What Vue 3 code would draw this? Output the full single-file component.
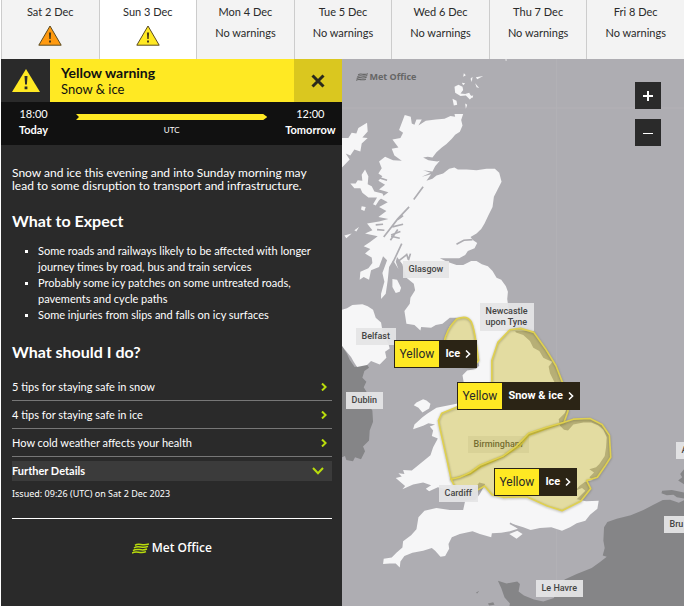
<script setup>
import { ref } from 'vue'

const days = [
  { label: 'Sat 2 Dec', level: 'amber' },
  { label: 'Sun 3 Dec', level: 'yellow' },
  { label: 'Mon 4 Dec' },
  { label: 'Tue 5 Dec' },
  { label: 'Wed 6 Dec' },
  { label: 'Thu 7 Dec' },
  { label: 'Fri 8 Dec' },
]
const selectedDay = ref('Sun 3 Dec')

const advice = [
  '5 tips for staying safe in snow',
  '4 tips for staying safe in ice',
  'How cold weather affects your health',
]

// x / y are positions on the map canvas
const cities = [
  { name: 'Glasgow', x: 61, y: 202 },
  { name: 'Newcastle\nupon Tyne', x: 138, y: 244 },
  { name: 'Belfast', x: 14, y: 269 },
  { name: 'Dublin', x: 4, y: 333 },
  { name: 'Birmingham', x: 126, y: 377 },
  { name: 'Cardiff', x: 97, y: 426, front: true },
  { name: 'Le Havre', x: 194, y: 521 },
  { name: 'A', x: 334, y: 383 },
  { name: 'Bru', x: 322, y: 457 },
]

const pins = [
  { level: 'Yellow', type: 'Ice', x: 52, y: 281 },
  { level: 'Yellow', type: 'Snow & ice', x: 115, y: 323 },
  { level: 'Yellow', type: 'Ice', x: 152, y: 409 },
]

const areas = [
  'M340 776 C360 768 376 770 384 784 C394 806 396 830 402 870 L406 900 L390 920 L330 910 L302 850 C306 824 316 800 340 776 Z',
  'M500 808 L532 804 572 816 606 864 638 916 656 962 672 1000 674 1052 662 1086 610 1104 556 1124 530 1156 480 1188 410 1220 380 1240 324 1256 312 1200 290 1102 286 1080 296 1058 340 1040 440 1020 446 960 446 900 464 846 Z',
  'M324 1256 L350 1250 380 1236 410 1214 480 1186 520 1156 556 1118 610 1100 660 1086 690 1076 740 1074 776 1092 798 1124 802 1190 784 1218 762 1250 730 1260 742 1284 712 1322 656 1350 612 1336 550 1308 480 1310 446 1302 424 1276 400 1290 374 1298 344 1296 Z',
]
</script>

<template>
  <div class="page">
    <nav class="days">
      <button
        v-for="day in days"
        :key="day.label"
        class="day"
        :class="{ active: day.label === selectedDay }"
        @click="selectedDay = day.label"
      >
        <span>{{ day.label }}</span>
        <svg v-if="day.level" class="day-icon" :class="day.level" viewBox="0 0 24 21">
          <path d="M12 1 L23.2 20.2 H.8 Z" stroke="#5a4a20" stroke-width="1" />
          <path d="M10.9 7.5 h2.2 l-.4 6.6 h-1.4 Z M11 15.4 h2 v2 h-2 Z" class="mark" />
        </svg>
        <span v-else>No warnings</span>
      </button>
    </nav>

    <div class="main">
      <section class="panel">
        <header class="warning-head">
          <div class="warning-icon">
            <svg viewBox="0 0 28 23">
              <path d="M14 0 L28 23 H0 Z" fill="#ffe923" />
              <path d="M12.5 7 h3 l-.6 8.6 h-1.8 Z M12.6 17.4 h2.8 v2.8 h-2.8 Z" fill="#2a2a2a" />
            </svg>
          </div>
          <div class="warning-title">
            <h1>Yellow warning</h1>
            <p>Snow &amp; ice</p>
          </div>
          <button class="close-btn" aria-label="Close">
            <svg viewBox="0 0 14 14">
              <path d="M1.5 1.5 L12.5 12.5 M12.5 1.5 L1.5 12.5" stroke="#2a2a1c" stroke-width="3" />
            </svg>
          </button>
        </header>

        <div class="timeline">
          <div class="time"><span>18:00</span><strong>Today</strong></div>
          <div class="bar">
            <svg viewBox="0 0 192 6" preserveAspectRatio="none">
              <path d="M0 0 H188 L192 3 L188 6 H0 L3 3 Z" fill="#ffe923" />
            </svg>
            <small>UTC</small>
          </div>
          <div class="time"><span>12:00</span><strong>Tomorrow</strong></div>
        </div>

        <div class="details">
          <p class="intro">
            Snow and ice this evening and into Sunday morning may
            lead to some disruption to transport and infrastructure.
          </p>
          <h2>What to Expect</h2>
          <ul class="expect">
            <li>Some roads and railways likely to be affected with longer journey times by road, bus and train services</li>
            <li>Probably some icy patches on some untreated roads, pavements and cycle paths</li>
            <li>Some injuries from slips and falls on icy surfaces</li>
          </ul>
          <h2>What should I do?</h2>
          <a v-for="tip in advice" :key="tip" href="#" class="tip">
            <span>{{ tip }}</span>
            <svg viewBox="0 0 6 8"><path d="M1 .5 L4.6 4 L1 7.5" /></svg>
          </a>
          <button class="further">
            <span>Further Details</span>
            <svg viewBox="0 0 12 8"><path d="M1 1 L6 6.3 L11 1" /></svg>
          </button>
          <p class="issued">Issued: 09:26 (UTC) on Sat 2 Dec 2023</p>
          <footer class="brand">
            <svg viewBox="0 0 17 11">
              <path d="M3 2.4 C7 -.8 10 3.6 17 .9 M2 5 C6.5 1.6 10 6.2 16 3.4 M1 7.6 C5.5 4.2 9 8.8 15 6 M0 10.2 C4.5 6.8 8 11.4 14 8.6" />
            </svg>
            <span>Met Office</span>
          </footer>
        </div>
      </section>

      <section class="map">
        <svg class="layer" viewBox="-3 -3 1026 1641" preserveAspectRatio="xMinYMin slice">
          <path class="grid" d="M640 -3 V1638 M-3 144 H1023" />
          <!-- Ireland and the continent -->
          <path class="far" d="M-3 856 L12 880 20 898 35 920 58 914 72 912 78 922 64 932 58 952 70 964 62 980 74 1000 68 1012 78 1036 88 1050 90 1084 80 1110 78 1140 60 1158 66 1172 54 1196 36 1190 30 1202 10 1198 6 1186 -3 1190 Z" />
          <path class="far" d="M1023 1318 L1006 1326 980 1317 958 1318 930 1332 900 1348 862 1364 820 1374 792 1384 782 1400 780 1440 784 1462 778 1484 790 1488 770 1504 745 1522 700 1540 664 1556 640 1585 632 1612 600 1622 572 1616 542 1604 526 1592 530 1570 522 1562 490 1568 464 1560 474 1582 484 1610 500 1628 498 1638 H1023 Z" />
          <path class="far" d="M1023 1224 L1010 1240 1016 1250 1004 1260 1023 1272 Z M956 1290 L985 1288 1023 1296 1023 1314 1000 1310 990 1302 970 1304 954 1298 Z M398 1596 L408 1590 402 1598 Z M434 1628 L450 1624 454 1632 438 1634 Z" />
          <!-- Great Britain -->
          <path class="land" d="M185 165 L203 170 206 190 214 194 220 178 236 178 226 196 248 182 278 178 304 176 322 168 336 170 334 162 360 162 354 180 358 196 350 215 336 224 326 236 310 252 296 262 280 276 268 292 254 290 240 292 256 300 282 304 290 302 276 318 268 334 240 330 262 338 236 350 264 342 250 362 268 356 280 346 300 340 318 326 334 322 344 328 370 328 400 330 430 326 455 326 468 338 475 365 462 390 452 410 448 440 436 464 424 490 414 506 400 520 382 530 390 540 402 548 394 564 374 572 366 584 348 594 330 594 290 594 312 604 340 614 360 614 384 602 400 602 416 612 434 618 448 632 460 652 474 658 488 678 494 694 492 716 496 746 506 770 510 798 518 816 540 824 560 842 570 862 588 872 600 892 612 898 628 904 616 918 620 938 632 962 654 1000 674 1036 664 1058 646 1076 650 1096 662 1108 674 1110 690 1092 720 1086 744 1086 764 1094 780 1108 790 1130 788 1160 784 1186 768 1210 758 1220 738 1226 752 1236 738 1250 748 1258 724 1264 708 1276 696 1290 716 1282 726 1290 710 1306 700 1316 728 1322 766 1320 762 1344 740 1362 726 1380 700 1388 680 1400 656 1410 624 1400 590 1402 562 1408 540 1400 508 1390 524 1404 500 1412 474 1416 446 1418 444 1430 410 1420 388 1412 350 1420 326 1430 316 1450 318 1464 306 1486 292 1488 276 1470 266 1462 240 1470 208 1476 184 1486 172 1502 170 1520 158 1508 140 1508 120 1510 122 1494 146 1490 160 1476 178 1460 180 1442 204 1424 220 1406 226 1370 244 1350 280 1342 320 1348 360 1348 366 1320 396 1318 410 1300 426 1270 408 1266 394 1284 368 1290 350 1296 320 1300 304 1284 284 1280 258 1292 248 1284 264 1274 240 1266 210 1272 178 1286 186 1276 158 1252 176 1248 166 1238 184 1240 180 1228 206 1230 230 1210 262 1184 270 1160 284 1134 266 1126 270 1110 260 1098 276 1092 256 1088 240 1096 210 1106 214 1092 238 1070 252 1060 280 1042 340 1030 368 1010 364 980 358 944 372 930 398 926 408 916 400 884 370 890 340 870 318 862 306 840 318 800 340 776 362 772 320 772 298 790 278 794 264 802 234 800 232 810 214 794 190 790 184 752 200 730 202 712 216 690 212 670 190 652 182 630 178 612 162 590 158 604 166 626 150 600 138 620 134 660 128 700 114 716 114 700 124 664 118 638 132 600 120 588 108 620 84 630 78 658 62 650 50 658 52 634 76 624 88 608 86 592 66 580 82 566 62 558 80 546 104 528 66 520 88 510 72 490 108 484 136 476 106 470 130 452 108 440 134 426 112 414 136 396 108 388 126 374 106 362 118 348 106 340 116 324 108 304 126 290 150 300 176 302 154 286 146 266 166 262 148 238 172 234 180 218 168 210 Z" />
          <path class="land" d="M22 370 L38 370 44 360 58 362 56 344 66 328 76 348 74 372 86 378 94 394 118 400 122 408 108 420 98 436 90 432 102 412 76 412 58 398 52 384 34 384 Z M-3 234 L16 234 26 218 40 220 46 204 72 188 74 214 58 232 74 234 56 250 52 274 34 268 22 286 8 280 20 298 -3 322 Z M56 438 L68 440 64 452 54 448 Z M4 526 L26 520 10 534 Z M34 510 L48 500 40 514 Z" />
          <path class="land" d="M334 80 L346 74 358 80 360 90 352 100 366 102 378 98 386 112 380 118 368 106 352 108 336 98 Z M328 116 L340 122 342 134 332 136 Z M366 130 L372 134 368 146 Z M362 40 L368 46 360 50 Z M356 68 L366 70 360 76 Z M382 56 L388 50 386 66 Z M398 52 L420 48 402 58 Z M396 70 L408 84 400 82 Z M380 108 L390 106 388 114 Z M486 -2 L492 -1 488 3 Z" />
          <path class="land" d="M-3 748 L12 744 28 734 58 732 74 738 90 748 98 772 114 786 118 810 136 850 140 864 126 874 130 892 110 912 84 902 72 914 42 920 32 904 24 890 4 866 -3 856 Z M148 656 L162 658 174 682 170 694 158 698 148 680 Z M220 1026 L240 1016 250 1020 262 1030 258 1044 238 1056 226 1042 212 1034 Z M498 1420 L522 1410 538 1420 520 1434 Z" />
          <path class="loch" d="M240 380 L212 418 M198 440 L164 476 L122 530 M164 478 L180 466 M164 508 L142 540 M120 492 L98 494 M124 510 L102 508 M180 492 L148 500 M172 514 L144 524 M190 584 L164 604 M176 550 L148 610 M190 580 L196 598 M202 580 L196 600 M340 552 L362 540 L388 538 M144 528 L170 534 M100 350 L132 360 M500 1388 L526 1402" />
        </svg>

        <span
          v-for="city in cities"
          :key="city.name"
          class="city"
          :class="{ front: city.front }"
          :style="{ left: city.x + 'px', top: city.y + 'px' }"
        >{{ city.name }}</span>

        <svg class="layer" viewBox="-3 -3 1026 1641" preserveAspectRatio="xMinYMin slice">
          <g v-for="area in areas" :key="area">
            <path class="area" :d="area" />
            <path class="area-edge" :d="area" />
          </g>
        </svg>

        <div class="map-brand">
          <svg viewBox="0 0 17 11">
            <path d="M3 2.4 C7 -.8 10 3.6 17 .9 M2 5 C6.5 1.6 10 6.2 16 3.4 M1 7.6 C5.5 4.2 9 8.8 15 6 M0 10.2 C4.5 6.8 8 11.4 14 8.6" />
          </svg>
          <span>Met Office</span>
        </div>

        <div class="zoom">
          <button aria-label="Zoom in">
            <svg viewBox="0 0 10 10"><path d="M0 4 H10 V6 H0 Z M4 0 H6 V10 H4 Z" /></svg>
          </button>
          <button aria-label="Zoom out">
            <svg viewBox="0 0 10 10"><path d="M0 5 H10 V6 H0 Z" /></svg>
          </button>
        </div>

        <button
          v-for="(pin, i) in pins"
          :key="i"
          class="pin"
          :style="{ left: pin.x + 'px', top: pin.y + 'px' }"
        >
          <span class="pin-level">{{ pin.level }}</span>
          <span class="pin-type">
            {{ pin.type }}
            <svg viewBox="0 0 6 8"><path d="M1 .5 L4.6 4 L1 7.5" /></svg>
          </span>
        </button>
      </section>
    </div>
  </div>
</template>

<style>
body {
  background: #fff;
}
</style>

<style scoped>
.page {
  min-height: 100vh;
  display: flex;
  flex-direction: column;
  padding: 0 2px 0 1px;
  box-sizing: border-box;
  font-family: Lato, 'Noto Sans', sans-serif;
  color: #2a2a2a;
}
button {
  border: none;
  border-radius: 0;
  padding: 0;
  font-family: inherit;
  color: inherit;
  cursor: pointer;
}
h1, h2, p, ul {
  margin: 0;
}
svg {
  display: block;
}

.days {
  display: grid;
  grid-template-columns: repeat(7, 1fr);
  height: 59px;
}
.day {
  background: #f3f3f3;
  border-left: 1px solid #ccc;
  display: flex;
  flex-direction: column;
  align-items: center;
  gap: 5px;
  padding-top: 4px;
  font-size: 11px;
  line-height: 16px;
}
.day.active {
  background: #fff;
}
.day-icon {
  width: 24px;
  height: 21px;
}
.day-icon.amber { fill: #ff9a10; }
.day-icon.yellow { fill: #ffe923; }
.day-icon .mark { fill: #4a3a18; }

.main {
  flex: 1;
  display: flex;
}
.panel {
  width: calc(50% - 1px);
  background: #2a2a2a;
  color: #fff;
}
.warning-head {
  display: flex;
  height: 43px;
}
.warning-icon {
  width: 49px;
  display: flex;
  align-items: center;
  justify-content: center;
}
.warning-icon svg {
  width: 28px;
  height: 23px;
}
.warning-title {
  flex: 1;
  background: #ffe923;
  color: #111;
  padding: 6px 11px 0;
  line-height: 16px;
  font-size: 13px;
}
.warning-title h1 {
  font-size: 14px;
  font-weight: 700;
}
.close-btn {
  width: 48px;
  background: #dac71f;
  display: flex;
  align-items: center;
  justify-content: center;
}
.close-btn svg {
  width: 14px;
  height: 14px;
}
.timeline {
  display: flex;
  justify-content: space-between;
  height: 43px;
  padding: 4px 6px 0 18px;
  box-sizing: border-box;
  background: #111;
  font-size: 11px;
  line-height: 16px;
}
.time {
  display: flex;
  flex-direction: column;
  align-items: center;
}
.bar {
  flex: 1;
  padding: 8px 18px 0 28px;
  text-align: center;
}
.bar svg {
  width: 100%;
  height: 6px;
}
.bar small {
  display: block;
  font-size: 8px;
  line-height: 20px;
}

.details {
  padding: 21px 10px 0 11px;
  font-size: 11px;
}
.intro {
  font-size: 12px;
  line-height: 13px;
  padding-right: 16px;
}
h2 {
  font-size: 16px;
  line-height: 20px;
  margin: 19px 0 12px;
}
.expect + h2 {
  margin-bottom: 11px;
}
.expect {
  list-style: square;
  padding-left: 26px;
  line-height: 16px;
}
.expect li::marker {
  font-size: 9px;
}
.tip {
  display: flex;
  align-items: center;
  justify-content: space-between;
  height: 27px;
  padding-right: 5px;
  border-bottom: 1px solid #777;
  color: #fff;
  text-decoration: none;
}
.tip svg {
  width: 6px;
  height: 8px;
}
.tip path,
.further path {
  fill: none;
  stroke: #b9dc0c;
  stroke-width: 2;
}
.further {
  display: flex;
  align-items: center;
  justify-content: space-between;
  width: 100%;
  height: 20px;
  margin-top: 4px;
  padding-right: 8px;
  background: #3b3b3b;
  color: #fff;
  font-size: 11px;
  font-weight: 700;
  line-height: 16px;
}
.further svg {
  width: 12px;
  height: 8px;
}
.issued {
  font-family: 'Noto Sans', sans-serif;
  font-size: 9px;
  line-height: 12px;
  padding: 7px 0 18px;
  border-bottom: 1px solid #fff;
}
.brand {
  display: flex;
  align-items: center;
  justify-content: center;
  gap: 3px;
  padding: 20px 0;
  font-family: 'Open Sans', sans-serif;
  font-size: 12px;
  font-weight: 600;
  line-height: 18px;
}
.brand svg {
  width: 17px;
  height: 11px;
  fill: none;
  stroke: #b9dc0c;
  stroke-width: 1.5;
}

.map {
  flex: 1;
  position: relative;
  overflow: hidden;
  background: #aeadb2;
}
.layer {
  position: absolute;
  top: 0;
  left: 0;
  width: 100%;
  height: 100%;
}
.grid {
  fill: none;
  stroke: #b3b2b6;
  stroke-width: 3;
}
.land { fill: #f6f6f7; }
.far { fill: #858587; }
.loch {
  fill: none;
  stroke: #aeadb2;
  stroke-width: 5;
}
.area {
  fill: rgba(198, 180, 20, 0.38);
}
.area-edge {
  fill: none;
  stroke: #dfd050;
  stroke-width: 5;
  stroke-linejoin: round;
  filter: drop-shadow(0 2px 3px rgba(60, 60, 30, 0.4));
}
.city {
  position: absolute;
  padding: 3px 6px;
  background: rgba(228, 228, 229, 0.94);
  color: #444;
  font-family: Roboto, sans-serif;
  font-size: 9px;
  font-weight: 500;
  line-height: 11px;
  white-space: pre;
}
.city.front {
  z-index: 1;
}
.map-brand {
  position: absolute;
  top: 10px;
  left: 14px;
  display: flex;
  align-items: center;
  gap: 2px;
  color: #666;
  font-family: 'Open Sans', sans-serif;
  font-size: 9px;
  font-weight: 700;
  line-height: 16px;
}
.map-brand svg {
  width: 12px;
  height: 8px;
  fill: none;
  stroke: #666;
  stroke-width: 1.5;
}
.zoom {
  position: absolute;
  top: 23px;
  right: 23px;
  display: flex;
  flex-direction: column;
  gap: 10px;
}
.zoom button {
  width: 26px;
  height: 27px;
  display: flex;
  align-items: center;
  justify-content: center;
  background: #2a2a2a;
}
.zoom svg {
  width: 10px;
  height: 10px;
  fill: #fff;
}
.pin {
  position: absolute;
  z-index: 2;
  display: flex;
  height: 28px;
  border: 1px solid #2b2415;
  background: #2b2415;
  font-family: Roboto, sans-serif;
  font-size: 12px;
  line-height: 26px;
  white-space: nowrap;
}
.pin-level {
  padding: 0 5px;
  background: #ffe923;
}
.pin-type {
  display: flex;
  align-items: center;
  gap: 5px;
  padding: 0 5px 0 6px;
  color: #fff;
  font-size: 11px;
  font-weight: 700;
}
.pin-type svg {
  width: 6px;
  height: 8px;
  fill: none;
  stroke: #fff;
  stroke-width: 1.5;
}
</style>
